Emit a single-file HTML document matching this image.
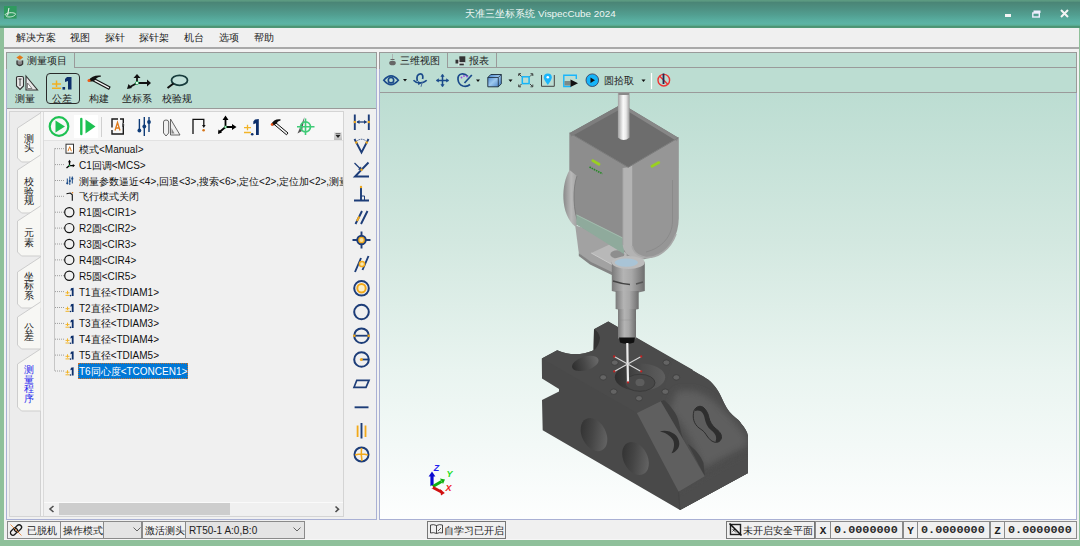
<!DOCTYPE html>
<html><head><meta charset="utf-8">
<style>
*{margin:0;padding:0;box-sizing:border-box}
html,body{width:1080px;height:546px;overflow:hidden;background:#8fc09a;font-family:"Liberation Sans",sans-serif;font-size:10px;color:#1a1a1a}
.a{position:absolute}
svg{position:absolute;overflow:visible}
#title{left:0;top:0;width:1080px;height:28px;background:linear-gradient(#5e9c82 0px,#5a9880 1px,#4a8576 2.5px,#4e9183 9px,#529f91 15px,#58ad9f 20px,#5cb4a5 24px,#58aa90 25.5px,#4c9474 26.5px,#4f9676 27.5px,#8ab8a0 28px)}
#menu{left:4px;top:28px;width:1075px;height:19px;background:#f0f0f0}
#menu span{position:absolute;top:3px;font-size:10px;color:#222}
.mint{background:#bcddd2}
.lbl{position:absolute;font-size:10px;color:#222;white-space:nowrap}
.tr{position:absolute;left:79px;font-size:10px;color:#111;white-space:nowrap;line-height:13px}
.vt{position:absolute;left:24px;width:10px;font-size:9.5px;line-height:9.6px;color:#222;text-align:center}
.sb{position:absolute;top:521px;height:18px;border:1px solid #8a8a8a;background:#f0f0f0;font-size:10px;line-height:17px;white-space:nowrap;color:#222}
</style></head><body>
<!-- TITLE -->
<div id="title" class="a">
  <svg style="left:4.2px;top:6.2px" width="12.6" height="12.6" viewBox="0 0 12.6 12.6"><rect width="12.6" height="12.6" fill="#2f9a5f"/><path d="M4.9 2 C4.6 4 4 7 3.6 9.5" stroke="#e8f4ec" stroke-width="1.1" fill="none"/><path d="M0.8 9 C2 6.5 9 6 11.3 7.6 C12.2 9 9 11 5 11 C2.5 11 1.5 10 2.5 8.8" stroke="#e0f0e6" stroke-width="0.9" fill="none"/></svg>
  <div class="a" style="left:0.5px;width:1080px;top:6.8px;text-align:center;color:#eef6f3;font-size:9.85px;line-height:13px">天准三坐标系统 VispecCube 2024</div>
  <div class="a" style="left:1004.5px;top:14px;width:6px;height:2.5px;background:#f4f4f4"></div>
  <svg style="left:1032px;top:10px" width="9" height="8"><rect x="0.8" y="3" width="6.5" height="4" fill="none" stroke="#eef" stroke-width="1.4"/><rect x="1.5" y="0.5" width="7" height="2.5" fill="#eef"/></svg>
  <svg style="left:1059.5px;top:9px" width="9" height="9"><path d="M1 1L8 8M8 1L1 8" stroke="#f4f4f4" stroke-width="2"/></svg>
</div>
<!-- MENU -->
<div id="menu" class="a">
  <span style="left:12px">解决方案</span>
  <span style="left:66px">视图</span>
  <span style="left:101px">探针</span>
  <span style="left:135px">探针架</span>
  <span style="left:180px">机台</span>
  <span style="left:215px">选项</span>
  <span style="left:250px">帮助</span>
</div>
<div class="a" style="left:4px;top:47px;width:1075px;height:2px;background:#a9a9a9"></div>
<div class="a" style="left:4px;top:49px;width:1075px;height:491px;background:#f2f2f2"></div>

<!-- LEFT PANEL -->
<div class="a mint" style="left:6px;top:52px;width:371px;height:57px;border-top:1px solid #9a9a9a;border-left:1px solid #9a9a9a;border-right:1px solid #9a9a9a"></div>
<div class="a" style="left:74px;top:52px;width:303px;height:16px;border-left:1px solid #9a9a9a;border-bottom:1px solid #9a9a9a"></div>
<div class="a" style="left:6px;top:108px;width:371px;height:1px;background:#9a9a9a"></div>
<div class="a" style="left:6px;top:109px;width:371px;height:411px;background:#f0f0f0;border-left:1px solid #a9b0d4;border-bottom:1px solid #a9b0d4;border-right:1px solid #a9b0d4"></div>
<div class="a" style="left:6px;top:69px;width:1px;height:40px;background:#a9b0d4"></div>
<!-- tab label -->
<svg style="left:14.5px;top:54.5px" width="10" height="12" viewBox="0 0 10 12"><path d="M4.8 0.3L8.2 2.6L4.8 4.9L1.4 2.6Z" fill="#e07818"/><path d="M2 5.5 L2 9 Q4.8 12 7.6 9 L7.6 5.5" stroke="#3a3a3a" stroke-width="1.3" fill="#8a8a8a"/><path d="M3.5 6 L6 6" stroke="#ccc" stroke-width="0.6"/></svg>
<div class="lbl" style="left:27px;top:54px;line-height:13px">测量项目</div>

<!-- inner frame -->
<div class="a" style="left:9px;top:111px;width:335px;height:406px;border:1px solid #d4d4d4;background:#f0f0f0"></div>

<!-- RIBBON ICONS -->
<svg style="left:15px;top:75px" width="24" height="16" viewBox="0 0 24 16">
 <path d="M1.5 2.5 Q1.5 1.5 3 1.5 L7 1.5 Q8.5 1.5 8.5 3 L8.5 11 L5 14.5 L1.5 11 Z" fill="#e8e8e8" stroke="#333" stroke-width="1.1"/>
 <path d="M3.5 4 L6.5 4 M5 4 L5 11" stroke="#333" stroke-width="0.9"/>
 <path d="M11 1 L22.5 15 L11 15 Z" fill="#e8e8e8" stroke="#333" stroke-width="1.1"/>
 <path d="M12.5 8 L12.5 13.5 L17 13.5 Z" fill="#fff" stroke="#555" stroke-width="0.7"/>
</svg>
<div class="lbl" style="left:15px;top:92.7px;line-height:12px">测量</div>
<div class="a" style="left:46px;top:73px;width:34px;height:31px;border:1px solid #2a2a2a;border-radius:4px"></div>
<svg style="left:51px;top:76px" width="23" height="15" viewBox="0 0 23 15">
 <path d="M1 8 L10 8 M5.5 4.5 L5.5 11 M1 12.3 L10 12.3" stroke="#f2b020" stroke-width="1.5"/>
 <path d="M16 1 L20.5 1 L20.5 13.5 L17 13.5 L17 5 L14 6 L14 3 Z" fill="#0d2f6b"/>
 <rect x="11.5" y="11" width="2.6" height="2.6" fill="#0d2f6b"/>
</svg>
<div class="lbl" style="left:52px;top:92.7px;line-height:12px">公差</div>
<svg style="left:87px;top:74px" width="24" height="16" viewBox="0 0 24 16">
 <path d="M7 4.5 L23 13 L21.8 15.2 L5.8 6.7 Z" fill="#f4f4f4" stroke="#111" stroke-width="1.1"/>
 <path d="M1.5 6.2 Q5.5 0.8 13.8 1.6 L13.8 2.8 Q9.5 3.2 8.2 6.2 L5 7.6 L2.5 7.5 Z" fill="#111"/>
 <circle cx="2" cy="6.6" r="1.5" fill="#f05a14"/>
</svg>
<div class="lbl" style="left:89px;top:92.7px;line-height:12px">构建</div>
<svg style="left:125px;top:73px" width="28" height="17" viewBox="0 0 28 17">
 <path d="M12 10 L12 4 M12 10 L23 10 M12 10 L4 14.5" stroke="#111" stroke-width="1.8"/>
 <path d="M12 1 L8.5 5 L15.5 5 Z M26 10 L22 6.5 L22 13.5 Z M2 16 L3.5 11 L7 15 Z" fill="#111"/>
 <circle cx="12" cy="10" r="1.6" fill="#fff" stroke="#1aa050" stroke-width="0.8"/>
</svg>
<div class="lbl" style="left:122px;top:92.7px;line-height:12px">坐标系</div>
<svg style="left:165px;top:74px" width="26" height="16" viewBox="0 0 26 16">
 <ellipse cx="14.5" cy="6.3" rx="8" ry="5" fill="#bfe0d8" stroke="#173c3c" stroke-width="1.8"/>
 <path d="M8.5 9.5 L2.5 14" stroke="#111" stroke-width="2"/>
</svg>
<div class="lbl" style="left:162px;top:92.7px;line-height:12px">校验规</div>

<!-- VERTICAL TABS -->
<div class="a" style="left:10px;top:112px;width:31px;height:404px;background:#ececec"></div>
<div class="a" style="left:40px;top:112px;width:1px;height:404px;background:#d2d2d2"></div>
<div class="a" style="left:41px;top:112px;width:2px;height:404px;background:#f4f4f4"></div>
<div class="a" style="left:43px;top:112px;width:1px;height:404px;background:#dadada"></div>
<svg style="left:0;top:0" width="50" height="520"><path d="M40.5 113 L17.5 128 L17.5 158 L21.5 162 L40.5 162" fill="#f7f7f4" stroke="#cdcdcd" stroke-width="1"/><path d="M40.5 155 L17.5 170 L17.5 209 L21.5 213 L40.5 213" fill="#f7f7f4" stroke="#cdcdcd" stroke-width="1"/><path d="M40.5 206 L17.5 221 L17.5 252 L21.5 256 L40.5 256" fill="#f7f7f4" stroke="#cdcdcd" stroke-width="1"/><path d="M40.5 257 L17.5 272 L17.5 304 L21.5 308 L40.5 308" fill="#f7f7f4" stroke="#cdcdcd" stroke-width="1"/><path d="M40.5 302 L17.5 317 L17.5 345 L21.5 349 L40.5 349" fill="#f7f7f4" stroke="#cdcdcd" stroke-width="1"/><path d="M40.5 349 L17.5 364 L17.5 407 L21.5 411 L40.5 411" fill="#f7f7f4" stroke="#cdcdcd" stroke-width="1"/></svg>
<div class="vt" style="top:133.9px;color:#222">测<br>头</div>
<div class="vt" style="top:177.1px;color:#222">校<br>验<br>规</div>
<div class="vt" style="top:228.4px;color:#222">元<br>素</div>
<div class="vt" style="top:271.6px;color:#222">坐<br>标<br>系</div>
<div class="vt" style="top:322.9px;color:#222">公<br>差</div>
<div class="vt" style="top:365.3px;color:#2a2aee">测<br>量<br>程<br>序</div>

<!-- INNER TOOLBAR -->
<div class="a" style="left:44px;top:112px;width:299px;height:29px;background:#f7f7f7;border-bottom:1px solid #e2e2e2"></div>
<div class="a" style="left:74px;top:115px;width:24px;height:23px;background:#ffffff"></div>
<svg style="left:0;top:0" width="350" height="145">
 <circle cx="59" cy="126.5" r="9.3" fill="none" stroke="#1dc152" stroke-width="2.2"/>
 <path d="M55.5 120.5 L55.5 132.5 L65 126.5 Z" fill="#1dc152"/>
 <path d="M81.3 119 L81.3 134" stroke="#1dc152" stroke-width="2.4" stroke-linecap="round"/>
 <path d="M85.5 119.5 L85.5 133.5 L95.5 126.5 Z" fill="#1dc152"/>
 <path d="M101.5 117 L101.5 137" stroke="#d0d0d0" stroke-width="1"/>
 <path d="M118 119 L112 119 L112 127.5 M112 130 L112 134 L123.3 134 L123.3 126 M123.3 123.5 L123.3 119 L120 119" stroke="#1a1a1a" stroke-width="1.4" fill="none"/>
 <path d="M124.5 125 L122.3 123 L122.3 127 Z" fill="#1a1a1a"/>
 <path d="M115 130.5 L117.5 122.5 L120 130.5 M115.8 128 L119.2 128" stroke="#e07a1a" stroke-width="1.3" fill="none"/>
 <path d="M139.4 119 L139.4 131 M144.3 117 L144.3 136 M149 117 L149 132" stroke="#0f3c78" stroke-width="1.4"/>
 <circle cx="139.4" cy="130.5" r="1.9" fill="#0f3c78"/><circle cx="144.3" cy="126.5" r="1.9" fill="#0f3c78"/><circle cx="149" cy="122" r="1.9" fill="#0f3c78"/>
 <path d="M163.5 122 Q163.5 120 166 120 Q168.7 120 168.7 122 L168.7 133 L166 136 L163.5 133 Z" fill="#f0f0f0" stroke="#555" stroke-width="0.9"/>
 <path d="M170.5 119 L180 135 L170.5 135 Z" fill="#eee" stroke="#555" stroke-width="0.9"/>
 <path d="M171.5 128 L171.5 133.5 L174.5 133.5 Z" fill="#888"/>
 <path d="M193 134 L193 119.3 L203.8 119.3 L203.8 126" stroke="#111" stroke-width="1.3" fill="none"/>
 <path d="M203.8 128 L202 125 L205.6 125 Z" fill="#111"/>
 <circle cx="203.6" cy="130.3" r="1.3" fill="#d5751a"/>
 <path d="M225.5 127 L225.5 119 M225.5 127 L234 127 M225.5 127 L219 132.5" stroke="#000" stroke-width="1.8"/>
 <path d="M225.5 115.5 L222.5 120 L228.5 120 Z M236.5 127 L232 124 L232 130 Z M218 134 L218.5 129.5 L222 132.5 Z" fill="#000"/>
 <circle cx="225.5" cy="127" r="1.1" fill="#e8fff0" stroke="#22b050" stroke-width="0.6"/>
 <path d="M244 127.7 L251 127.7 M247.5 124.8 L247.5 130.3 M244 132.5 L251 132.5" stroke="#f2b428" stroke-width="1.3"/>
 <path d="M255 119.5 L258.8 119 L258.8 135 L256 135 L256 123.3 L253.3 124.3 L253.3 121.5 Z" fill="#0d2f6b"/>
 <circle cx="252.2" cy="134.3" r="1.3" fill="#0d2f6b"/>
 <path d="M275.5 122.5 L288 133 L286.5 134.8 L274 124.3 Z" fill="#f4f4f4" stroke="#111" stroke-width="1"/>
 <path d="M271 124.5 Q274 118.5 280.5 119.3 L280.5 120.5 Q277.5 121 276.5 123.5 L274 125.3 L272.3 125.5 Z" fill="#111"/>
 <circle cx="272" cy="124.5" r="1.3" fill="#f0500f"/>
 <path d="M304.5 117 L297.5 133.5 L302 131 Z" fill="#555"/>
 <circle cx="305.5" cy="126.8" r="5" fill="none" stroke="#3fcb77" stroke-width="1.7"/>
 <path d="M297 126.8 L314.5 126.8 M305.5 118.5 L305.5 135" stroke="#3fcb77" stroke-width="1.6"/>
</svg>
<div class="a" style="left:334px;top:132px;width:8px;height:8px;background:linear-gradient(#e8e8e8,#bcbcbc)"></div>
<svg style="left:335px;top:133px" width="6" height="6"><path d="M0.5 0.8 L5.5 0.8" stroke="#222" stroke-width="0.8"/><path d="M0.5 2 L5.5 2 L3 5 Z" fill="#222"/></svg>

<!-- TREE -->
<svg style="left:0;top:0" width="80" height="380">
 <path d="M54.5 148.5 L54.5 371" stroke="#9c9c9c" stroke-width="1" stroke-dasharray="1 1"/>
 <g stroke="#9c9c9c" stroke-width="1" stroke-dasharray="1 1"><path d="M55 148.7 L64 148.7"/><path d="M55 164.6 L64 164.6"/><path d="M55 180.5 L64 180.5"/><path d="M55 196.3 L64 196.3"/><path d="M55 212.2 L64 212.2"/><path d="M55 228.1 L64 228.1"/><path d="M55 244.0 L64 244.0"/><path d="M55 259.9 L64 259.9"/><path d="M55 275.7 L64 275.7"/><path d="M55 291.6 L64 291.6"/><path d="M55 307.5 L64 307.5"/><path d="M55 323.4 L64 323.4"/><path d="M55 339.2 L64 339.2"/><path d="M55 355.1 L64 355.1"/><path d="M55 371.0 L64 371.0"/></g><rect x="66" y="144.2" width="7.5" height="9" fill="#fff" stroke="#333" stroke-width="1"/><path d="M68 151.2 L69.7 146.7 L71.4 151.2" stroke="#e07a1a" stroke-width="1" fill="none"/><path d="M69.5 165.6 L69.5 161.6 M69.5 165.6 L74 165.6 M69.5 165.6 L66.5 168.1" stroke="#000" stroke-width="1.3"/><path d="M69.5 159.8 L68 162.3 L71 162.3 Z M75 165.6 L72.8 164.0 L72.8 167.2 Z" fill="#000"/><circle cx="69.5" cy="165.6" r="0.8" fill="#2b5"/><path d="M67.3 178.5 L67.3 184.0 M69.8 176.5 L69.8 185.0 M72.3 176.5 L72.3 183.5" stroke="#1a4a88" stroke-width="1"/><circle cx="67.3" cy="183.3" r="1.1" fill="#1a4a88"/><circle cx="69.8" cy="181.0" r="1.1" fill="#1a4a88"/><circle cx="72.3" cy="178.7" r="1.1" fill="#1a4a88"/><path d="M66.5 193.8 L70.3 193.0 L72.3 194.8 L72.3 200.8" stroke="#111" stroke-width="1.1" fill="none"/><circle cx="72.5" cy="192.8" r="0.8" fill="#d5751a"/><circle cx="69.3" cy="212.2" r="4.6" fill="none" stroke="#111" stroke-width="1.2"/><circle cx="69.3" cy="228.1" r="4.6" fill="none" stroke="#111" stroke-width="1.2"/><circle cx="69.3" cy="244.0" r="4.6" fill="none" stroke="#111" stroke-width="1.2"/><circle cx="69.3" cy="259.9" r="4.6" fill="none" stroke="#111" stroke-width="1.2"/><circle cx="69.3" cy="275.7" r="4.6" fill="none" stroke="#111" stroke-width="1.2"/><path d="M65.5 292.8 L69.5 292.8 M67.5 290.8 L67.5 294.2 M65.5 295.4 L69.5 295.4" stroke="#f2b428" stroke-width="1"/><path d="M71 288.3 L73.6 287.8 L73.6 296.1 L71.8 296.1 L71.8 290.3 L70.3 290.8 Z" fill="#0d2f6b"/><circle cx="70.5" cy="295.6" r="0.8" fill="#0d2f6b"/><path d="M65.5 308.7 L69.5 308.7 M67.5 306.7 L67.5 310.1 M65.5 311.3 L69.5 311.3" stroke="#f2b428" stroke-width="1"/><path d="M71 304.2 L73.6 303.7 L73.6 312.0 L71.8 312.0 L71.8 306.2 L70.3 306.7 Z" fill="#0d2f6b"/><circle cx="70.5" cy="311.5" r="0.8" fill="#0d2f6b"/><path d="M65.5 324.6 L69.5 324.6 M67.5 322.6 L67.5 326.0 M65.5 327.2 L69.5 327.2" stroke="#f2b428" stroke-width="1"/><path d="M71 320.1 L73.6 319.6 L73.6 327.9 L71.8 327.9 L71.8 322.1 L70.3 322.6 Z" fill="#0d2f6b"/><circle cx="70.5" cy="327.4" r="0.8" fill="#0d2f6b"/><path d="M65.5 340.4 L69.5 340.4 M67.5 338.4 L67.5 341.8 M65.5 343.0 L69.5 343.0" stroke="#f2b428" stroke-width="1"/><path d="M71 335.9 L73.6 335.4 L73.6 343.7 L71.8 343.7 L71.8 337.9 L70.3 338.4 Z" fill="#0d2f6b"/><circle cx="70.5" cy="343.2" r="0.8" fill="#0d2f6b"/><path d="M65.5 356.3 L69.5 356.3 M67.5 354.3 L67.5 357.7 M65.5 358.9 L69.5 358.9" stroke="#f2b428" stroke-width="1"/><path d="M71 351.8 L73.6 351.3 L73.6 359.6 L71.8 359.6 L71.8 353.8 L70.3 354.3 Z" fill="#0d2f6b"/><circle cx="70.5" cy="359.1" r="0.8" fill="#0d2f6b"/><path d="M65.5 372.2 L69.5 372.2 M67.5 370.2 L67.5 373.6 M65.5 374.8 L69.5 374.8" stroke="#f2b428" stroke-width="1"/><path d="M71 367.7 L73.6 367.2 L73.6 375.5 L71.8 375.5 L71.8 369.7 L70.3 370.2 Z" fill="#0d2f6b"/><circle cx="70.5" cy="375.0" r="0.8" fill="#0d2f6b"/>
</svg>
<div class="a" style="left:44px;top:141px;width:299px;height:361px;overflow:hidden"><div class="tr" style="left:35px;top:1.7px">模式&lt;Manual&gt;</div><div class="tr" style="left:35px;top:17.6px">C1回调&lt;MCS&gt;</div><div class="tr" style="left:35px;top:33.5px">测量参数逼近&lt;4&gt;,回退&lt;3&gt;,搜索&lt;6&gt;,定位&lt;2&gt;,定位加&lt;2&gt;,测量</div><div class="tr" style="left:35px;top:49.3px">飞行模式关闭</div><div class="tr" style="left:35px;top:65.2px">R1圆&lt;CIR1&gt;</div><div class="tr" style="left:35px;top:81.1px">R2圆&lt;CIR2&gt;</div><div class="tr" style="left:35px;top:97.0px">R3圆&lt;CIR3&gt;</div><div class="tr" style="left:35px;top:112.9px">R4圆&lt;CIR4&gt;</div><div class="tr" style="left:35px;top:128.7px">R5圆&lt;CIR5&gt;</div><div class="tr" style="left:35px;top:144.6px">T1直径&lt;TDIAM1&gt;</div><div class="tr" style="left:35px;top:160.5px">T2直径&lt;TDIAM2&gt;</div><div class="tr" style="left:35px;top:176.4px">T3直径&lt;TDIAM3&gt;</div><div class="tr" style="left:35px;top:192.2px">T4直径&lt;TDIAM4&gt;</div><div class="tr" style="left:35px;top:208.1px">T5直径&lt;TDIAM5&gt;</div><div class="a" style="left:34px;top:222.0px;width:110px;height:15.6px;background:#0078d7;outline:1px dotted #c07030;outline-offset:-1px"></div><div class="tr" style="left:35px;top:224.0px;color:#fff">T6同心度&lt;TCONCEN1&gt;</div></div>


<!-- H SCROLLBAR -->
<div class="a" style="left:44px;top:502px;width:299px;height:1px;background:#fafafa"></div>
<div class="a" style="left:44px;top:503px;width:299px;height:13px;background:#f0f0f0"></div>
<div class="a" style="left:59px;top:503px;width:171px;height:12px;background:#cdcdcd"></div>
<svg style="left:0;top:0" width="345" height="520"><path d="M53.5 506 L50 509 L53.5 512" stroke="#505050" stroke-width="1.6" fill="none"/><path d="M335.5 506.5 L338.5 509.2 L335.5 512" stroke="#505050" stroke-width="1.6" fill="none"/></svg>
<!-- VERTICAL TOOLBAR -->
<svg style="left:0;top:0" width="380" height="470">
 <g stroke="#1d3d78" stroke-width="1.9" fill="none">
  <path d="M354.8 114.5 L354.8 130 M368.8 114.5 L368.8 130"/>
  <path d="M357 122 L366.5 122" stroke-width="1.3"/>
 </g>
 <path d="M356.5 122 L359.5 120 L359.5 124 Z M367 122 L364 120 L364 124 Z" fill="#1d3d78"/>
 <circle cx="354.8" cy="122" r="1.2" fill="#f2a91a"/><circle cx="368.8" cy="122" r="1.2" fill="#f2a91a"/>
 <path d="M354.5 139 L361.5 152.5 L368.5 139" stroke="#1d3d78" stroke-width="1.9" fill="none"/>
 <path d="M357.5 140.5 Q361.5 138 365.5 140.5" stroke="#1d3d78" stroke-width="1" stroke-dasharray="1 0.8" fill="none"/>
 <circle cx="356.3" cy="142.5" r="1.2" fill="#f2a91a"/><circle cx="366.7" cy="142.5" r="1.2" fill="#f2a91a"/>
 <path d="M368.5 162.5 L355 176.5 L369 176.5" stroke="#1d3d78" stroke-width="1.9" fill="none"/>
 <path d="M354.5 163 L360.5 169" stroke="#1d3d78" stroke-width="1.2"/>
 <path d="M361.8 170.3 L358 169.5 L361 166.5 Z" fill="#1d3d78"/>
 <circle cx="361.5" cy="169.8" r="1.2" fill="#f2a91a"/>
 <path d="M354 200.5 L369 200.5 M361 187.5 L361 200.5" stroke="#1d3d78" stroke-width="1.9" fill="none"/>
 <path d="M361 196 L364.5 196 L364.5 200" stroke="#1d3d78" stroke-width="1" fill="none"/>
 <circle cx="361" cy="187" r="1.2" fill="#f2a91a"/>
 <path d="M355.5 224 L362 211 M361 224 L367.5 211" stroke="#1d3d78" stroke-width="1.9"/>
 <path d="M357 221 L359.3 216.5" stroke="#f2a91a" stroke-width="1.9"/>
 <circle cx="361.5" cy="240" r="4.3" fill="#f2a91a" stroke="#1d3d78" stroke-width="1.9"/>
 <circle cx="361.5" cy="240" r="2" fill="#f7e0a0"/>
 <path d="M352.5 240 L357 240 M366 240 L370.5 240 M361.5 231.5 L361.5 235.5 M361.5 244.5 L361.5 248.5" stroke="#1d3d78" stroke-width="1.9"/>
 <path d="M355 272 L361 258 M362.5 270 L368.5 256" stroke="#1d3d78" stroke-width="1.9"/>
 <circle cx="362" cy="264" r="2.6" fill="#f7e7b0" stroke="#f2a91a" stroke-width="1.5"/>
 <circle cx="361.5" cy="288.3" r="7.3" fill="none" stroke="#1d3d78" stroke-width="2"/>
 <circle cx="361.5" cy="288.3" r="4.2" fill="#fbf0c8" stroke="#f2a91a" stroke-width="2"/>
 <circle cx="361.5" cy="312" r="7.3" fill="none" stroke="#1d3d78" stroke-width="2"/>
 <circle cx="361.5" cy="335.7" r="7.3" fill="none" stroke="#1d3d78" stroke-width="2"/>
 <path d="M354.5 335.7 L368.5 335.7" stroke="#1d3d78" stroke-width="1.8"/>
 <circle cx="354.3" cy="335.7" r="1.3" fill="#f2a91a"/><circle cx="368.7" cy="335.7" r="1.3" fill="#f2a91a"/>
 <circle cx="361.5" cy="359.5" r="7.3" fill="none" stroke="#1d3d78" stroke-width="2"/>
 <path d="M361.5 359.5 L368.5 359.5" stroke="#1d3d78" stroke-width="1.8"/>
 <circle cx="361.3" cy="359.5" r="1.5" fill="#f2a91a"/>
 <path d="M356.8 380.3 L369 380.3 L366 387.3 L354 387.3 Z" fill="none" stroke="#1d3d78" stroke-width="1.7"/>
 <path d="M354.6 407.3 L368.5 407.3" stroke="#1d3d78" stroke-width="1.9"/>
 <path d="M357.6 425.5 L357.6 437 M365.5 425.5 L365.5 437" stroke="#f2a91a" stroke-width="1.8"/>
 <path d="M361.5 423 L361.5 438.5" stroke="#1d3d78" stroke-width="1.9"/>
 <circle cx="361.5" cy="454.5" r="7" fill="none" stroke="#1d3d78" stroke-width="2"/>
 <path d="M355 455 Q361.5 453 368 455 M361.5 448 Q360.8 454.5 362 461" stroke="#f2a91a" stroke-width="1.5" fill="none"/>
</svg>

<!-- RIGHT PANEL -->
<div class="a" style="left:376px;top:52px;width:1px;height:468px;background:#a9b0d4"></div>
<div class="a" style="left:376px;top:52px;width:1px;height:17px;background:#9a9a9a"></div>
<div class="a mint" style="left:379px;top:52px;width:698px;height:41px;border-top:1px solid #9a9a9a;border-left:1px solid #9a9a9a;border-right:1px solid #9a9a9a"></div>
<div class="a" style="left:447px;top:52px;width:630px;height:16px;border-left:1px solid #9a9a9a;border-bottom:1px solid #9a9a9a"></div>
<div class="a" style="left:496px;top:52px;width:1px;height:16px;background:#9a9a9a"></div>
<div class="a" style="left:379px;top:92px;width:698px;height:1px;background:#9a9a9a"></div>
<div class="a" style="left:379px;top:93px;width:698px;height:427px;border-left:1px solid #a9b0d4;border-right:1px solid #a9b0d4;border-bottom:1px solid #a9b0d4;background:linear-gradient(#bcddd2 0%,#d3e8e0 35%,#e9f4f0 65%,#fdfefe 100%)"></div>
<div class="a" style="left:379px;top:69px;width:1px;height:24px;background:#a9b0d4"></div>
<svg style="left:388px;top:54px" width="9" height="12" viewBox="0 0 9 12"><path d="M4.5 0 L4.5 5" stroke="#aaa" stroke-width="0.8"/><path d="M2.5 5.5 L6.5 5.5" stroke="#666" stroke-width="1"/><ellipse cx="4.5" cy="9" rx="3.3" ry="2.3" fill="#666"/></svg>
<div class="lbl" style="left:400px;top:54px;line-height:13px">三维视图</div>
<svg style="left:455px;top:55.5px" width="11" height="10" viewBox="0 0 11 10"><rect x="4.3" y="0.3" width="6" height="6" fill="#333"/><rect x="0.5" y="3.7" width="3.5" height="3.8" fill="#333"/><rect x="4.3" y="7.3" width="4.5" height="2" fill="#333"/><path d="M3.8 2.8 L3.8 9.5 M3.8 7 L10 7" stroke="#fff" stroke-width="0.8"/></svg>
<div class="lbl" style="left:469px;top:54px;line-height:13px">报表</div>

<svg style="left:0;top:0" width="700" height="95">
 <path d="M383.8 80.2 Q391 71.5 398.3 80.2 Q391 89 383.8 80.2 Z" fill="none" stroke="#1a4a8a" stroke-width="1.7"/>
 <circle cx="391" cy="80.2" r="2.7" fill="none" stroke="#1a4a8a" stroke-width="1.6"/>
 <path d="M403 79 L407 79 L405 81.5 Z" fill="#111"/>
  <path d="M417.3 81 C416.2 77 417.5 73.8 420.4 73.8 C422.8 73.8 423.2 76.5 422.6 79" stroke="#1a4a8a" stroke-width="1.7" fill="none"/>
 <path d="M413.5 80.3 C415 82 417 83 419.3 83 C422 83 425 82 426.7 80.3" stroke="#1a4a8a" stroke-width="1.6" fill="none"/>
 <path d="M421.5 83 L418 81 L418.3 85.2 Z" fill="#1a4a8a"/>
 <path d="M422.3 82 L421 86.8" stroke="#4a6a9a" stroke-width="1"/>
<path d="M436.5 80.4 L448.5 80.4 M442.5 74.5 L442.5 86.5" stroke="#1a4a8a" stroke-width="1.5"/>
 <path d="M436 80.4 L438.8 78.3 L438.8 82.5 Z M449 80.4 L446.2 78.3 L446.2 82.5 Z M442.5 74 L440.4 76.8 L444.6 76.8 Z M442.5 87 L440.4 84.2 L444.6 84.2 Z" fill="#1a4a8a"/>
 <path d="M468 76.5 Q465 73.3 461.5 74 Q457.5 75 458 79.5 Q458.5 84.5 463 86 Q467 87 470 84.5" stroke="#1a4a8a" stroke-width="1.7" fill="none"/>
 <path d="M464.5 83 L471.8 75" stroke="#1a4a8a" stroke-width="1.7"/>
 <circle cx="461.5" cy="77.5" r="0.9" fill="#9a50e0"/><circle cx="464" cy="76" r="0.9" fill="#9a50e0"/><circle cx="467" cy="76.5" r="0.9" fill="#9a50e0"/>
 <path d="M476 79.5 L480 79.5 L478 82 Z" fill="#111"/>
 <defs><linearGradient id="cg" x1="0" y1="0" x2="1" y2="1"><stop offset="0" stop-color="#3f7cc8"/><stop offset="0.5" stop-color="#9cc8ee"/><stop offset="1" stop-color="#3a74c0"/></linearGradient></defs>
 <path d="M487.8 77.5 L490.8 74.5 L501.3 74.5 L501.3 83.8 L498.3 86.8 L487.8 86.8 Z" fill="url(#cg)" stroke="#1a2a3a" stroke-width="0.9"/>
 <path d="M487.8 77.5 L498.3 77.5 L501.3 74.5 M498.3 77.5 L498.3 86.8" stroke="#1a2a3a" stroke-width="0.8" fill="none"/>
 <path d="M508.5 79.5 L512.5 79.5 L510.5 82 Z" fill="#111"/>
 <rect x="522.3" y="76.8" width="6.8" height="6.8" fill="none" stroke="#16b4f8" stroke-width="1.5"/>
 <path d="M519 74 L521.5 76.5 M532.5 74 L530 76.5 M519 86.5 L521.5 84 M532.5 86.5 L530 84" stroke="#333" stroke-width="0.9"/>
 <path d="M518.7 73.7 L518.7 76 M518.7 73.7 L521 73.7 M532.8 73.7 L532.8 76 M532.8 73.7 L530.5 73.7 M518.7 86.8 L518.7 84.5 M518.7 86.8 L521 86.8 M532.8 86.8 L532.8 84.5 M532.8 86.8 L530.5 86.8" stroke="#333" stroke-width="0.9"/>
 <path d="M541.5 75 L541.5 86.3 L554.3 86.3 L554.3 75" stroke="#444" stroke-width="1" fill="none"/>
 <path d="M547.8 85 Q543.8 79.5 543.8 77.5 Q543.8 73.6 547.8 73.6 Q551.8 73.6 551.8 77.5 Q551.8 79.5 547.8 85 Z" fill="#19b6fb"/>
 <circle cx="547.8" cy="77.3" r="1.3" fill="#fff"/>
 <path d="M563.8 84 L563.8 75.3 L576.3 75.3 L576.3 79" stroke="#19b6fb" stroke-width="1.4" fill="none"/>
 <path d="M563.8 84 L563.8 86.5 L571 86.5" stroke="#19b6fb" stroke-width="1.4" fill="none"/>
 <rect x="564.5" y="81" width="6" height="4.5" fill="#7a8a88"/>
 <path d="M570.5 79.5 L578 83.2 L570.5 87 Z" fill="#111"/>
 <circle cx="592.3" cy="80.2" r="6.3" fill="#16b4f8" stroke="#335" stroke-width="0.8"/>
 <path d="M590.5 77.5 L590.5 83 L595 80.2 Z" fill="#111"/>
 <path d="M641.5 79.5 L645.5 79.5 L643.5 82 Z" fill="#111"/>
 <path d="M651.5 73 L651.5 89" stroke="#fff" stroke-width="1.2"/>
 <path d="M650.5 73 L650.5 89" stroke="#c8d8d0" stroke-width="0.6"/>
 <circle cx="663.8" cy="80.2" r="5.8" fill="none" stroke="#ee3333" stroke-width="1.4"/>
 <path d="M659.5 76 L668 84.5" stroke="#ee3333" stroke-width="1.4"/>
 <path d="M663.5 73.5 L663.5 84" stroke="#222a50" stroke-width="1.8"/>
</svg>
<div class="lbl" style="left:604px;top:73.5px;line-height:13px">圆拾取</div>


<!-- 3D SCENE -->
<div class="a" style="left:380px;top:93px;width:696px;height:426px;overflow:hidden">
<svg style="left:0;top:0" width="696" height="426" viewBox="380 93 696 426">
<defs>
 <clipPath id="rclip"><path d="M660.7 401.2 L673 359.3 C690 369 703 376 708.4 379.8 C715 385 719 392 721.5 397.4 C725 405 728 411 732.5 415 C737 419 740 421 741.3 423.7 C745 428 747 431 748 436 L748 473 L680 510 L678.6 491.7 L704.8 476.2 Z"/></clipPath>
 <filter id="blur3" x="-20%" y="-20%" width="140%" height="140%"><feGaussianBlur stdDeviation="3.5"/></filter><filter id="blur1" x="-20%" y="-20%" width="140%" height="140%"><feGaussianBlur stdDeviation="2"/></filter>
 <linearGradient id="shaft" x1="0" x2="1"><stop offset="0" stop-color="#a0a0a0"/><stop offset="0.45" stop-color="#fafafa"/><stop offset="0.7" stop-color="#e8e8e8"/><stop offset="1" stop-color="#9a9a9a"/></linearGradient>
 <linearGradient id="cyl" x1="0" x2="1"><stop offset="0" stop-color="#7a7a7a"/><stop offset="0.35" stop-color="#b4b4b4"/><stop offset="0.6" stop-color="#a8a8a8"/><stop offset="1" stop-color="#6e6e6e"/></linearGradient>
 <linearGradient id="strip" x1="0" x2="1"><stop offset="0" stop-color="#9a9a9a"/><stop offset="0.5" stop-color="#c8c8c8"/><stop offset="1" stop-color="#a4a4a4"/></linearGradient>
 <linearGradient id="hole2" x1="0" y1="0" x2="1" y2="1"><stop offset="0" stop-color="#2c2c2c"/><stop offset="0.45" stop-color="#454545"/><stop offset="1" stop-color="#6e6e6e"/></linearGradient>
 <linearGradient id="hole1" x1="0" y1="0" x2="1" y2="0"><stop offset="0" stop-color="#2e2e2e"/><stop offset="0.5" stop-color="#4a4a4a"/><stop offset="1" stop-color="#6a6a6a"/></linearGradient>
 <linearGradient id="bore" x1="0" y1="0" x2="1" y2="0"><stop offset="0" stop-color="#2e2e2e"/><stop offset="0.55" stop-color="#4e4e4e"/><stop offset="1" stop-color="#5e5e5e"/></linearGradient>
 <linearGradient id="fillet" x1="0" y1="1" x2="1" y2="0"><stop offset="0" stop-color="#555"/><stop offset="0.5" stop-color="#636363"/><stop offset="1" stop-color="#5a5a5a"/></linearGradient>
 <linearGradient id="disc" x1="0" x2="1"><stop offset="0" stop-color="#8a8a8a"/><stop offset="0.5" stop-color="#b8b8b8"/><stop offset="1" stop-color="#9a9a9a"/></linearGradient>
</defs>
<!-- block silhouette / front-left face -->
<path d="M608.3 321.4 L673 359.3 C690 369 703 376 708.4 379.8 C715 385 719 392 721.5 397.4 C725 405 728 411 732.5 415 C737 419 740 421 741.3 423.7 C745 428 747 431 748 436 L748 473 L680 510 L542.7 430.3 L542 400 L559 391.5 L559 389 L542 378.4 L541.8 358.4 L557.2 350.2 Q575.5 358 593.5 350.2 L594 329.3 Z" fill="#494949"/>
<!-- top face -->
<path d="M541.8 358.4 L557.2 350.2 Q575.5 358 593.5 350.2 L594 329.3 L608.3 321.4 L693 370 L660.7 401.2 L636.9 413 Z" fill="#4b4b4b"/>
<!-- cutout inner wall -->
<path d="M594 329.3 L594 350.2 Q599 346 600 338 Q599 332 594 329.3 Z" fill="#333"/>
<!-- fillet region right -->
<path d="M660.7 401.2 L673 359.3 C690 369 703 376 708.4 379.8 C715 385 719 392 721.5 397.4 C725 405 728 411 732.5 415 C737 419 740 421 741.3 423.7 C745 428 747 431 748 436 L748 473 L680 510 L678.6 491.7 L704.8 476.2 Z" fill="#4c4c4c"/>
<g clip-path="url(#rclip)"><g filter="url(#blur3)">
<path d="M676 392 C690 388 702 392 712 400 C724 410 738 424 747 438 L747 446 C735 452 718 460 704 468 C696 450 684 425 670 410 Z" fill="#5e5e5e"/>
</g></g>
<path clip-path="url(#rclip)" d="M704.8 476.2 C720 466 735 458 748 452 L748 473 L680 510 L678.6 491.7 Z" fill="#4d4d4d" filter="url(#blur1)"/>
<!-- groove dark band -->
<path d="M660.7 401.2 L664 400 C671 406 677 414 678.5 421 C680 428 681.5 434 683.5 440 Z" fill="#404040"/>
<path d="M688 444 C695 449 701 456 703.5 463 L704.8 476.2 Z" fill="#404040"/>
<!-- front-right face -->
<path d="M680 497 L704.8 482 L748 458 L748 473 L680 510 Z" fill="#4d4d4d"/>
<!-- slanted face -->
<path d="M636.9 413 L660.7 401.2 L704.8 476.2 L678.6 491.7 Z" fill="#5f5f5f"/>
<path d="M678.6 491.7 L680 510" stroke="#404040" stroke-width="0.6"/>
<!-- dogbone slot -->
<path d="M694 410.7 C696 406 701 405 704 408 C707 411 708.3 414 709 418 C710 422 712 425 715 428 C719 431 722 434 721.4 438 C720.5 442 716.7 443 714 442 C711 441 709.5 439.3 707 436 C704 431 702 430 699 428 C694 424 692 418 694 410.7 Z" fill="#5c5c5c" stroke="#2e2e2e" stroke-width="1"/>
<path d="M694.5 411 C696 406 701 405 704 408 C707 411 708.3 414 709 418 C710 422 712 425 715 428 C719 431 722 434 721.4 438 C720.5 442 717 443 715.5 441.5 C717.5 437 715 433 711.5 430.5 C707 427 705.5 422 704.5 417.5 C703.5 412 700 409 694.5 411 Z" fill="#2e2e2e"/>
<!-- crescent on slanted face -->
<path d="M659.9 431.5 C668 429 679 434 679.3 443.2 C679.5 448 676 452 671.5 453.3 C674 449 675 444 673 440 C670 435 665 432.5 659.9 431.5 Z" fill="#2e2e2e"/>
<!-- holes front -->
<ellipse cx="594" cy="434.6" rx="12" ry="17.5" transform="rotate(-27 594 434.6)" fill="url(#hole2)"/>
<ellipse cx="635.5" cy="458.5" rx="12" ry="17.5" transform="rotate(-27 635.5 458.5)" fill="url(#hole2)"/>
<!-- top holes -->
<ellipse cx="585.3" cy="363.4" rx="13.7" ry="6.8" transform="rotate(-17 585.3 363.4)" fill="url(#hole1)"/>
<ellipse cx="640" cy="377.2" rx="25.2" ry="13.8" fill="url(#bore)"/>
<ellipse cx="640" cy="382.8" rx="15" ry="8.5" fill="#484848" stroke="#3a3a3a" stroke-width="1"/>
<ellipse cx="640" cy="382.4" rx="4.5" ry="3.6" fill="#5d5d5d"/>
<g fill="#646464" stroke="#3a3a3a" stroke-width="0.7">
 <ellipse cx="614.8" cy="362.6" rx="3.4" ry="2.7"/><ellipse cx="666.4" cy="362.6" rx="3.4" ry="2.7"/>
 <ellipse cx="603.2" cy="377.4" rx="3.4" ry="2.7"/><ellipse cx="676.3" cy="377.4" rx="3.4" ry="2.7"/>
 <ellipse cx="613.7" cy="391.7" rx="3.4" ry="2.7"/><ellipse cx="665.3" cy="391.7" rx="3.4" ry="2.7"/>
 <ellipse cx="639" cy="398.3" rx="3.4" ry="2.7"/>
</g>

<!-- PROBE HEAD -->
<!-- bracket -->
<path d="M575.2 225.5 L578.8 252.9 L591 263 L616 275 L630 268 L626.6 240 Z" fill="#a2a2a2"/>
<path d="M578.8 252.9 L591 262 L616 274 L616 277 L590 264.5 L578.8 256 Z" fill="#848484"/>
<path d="M591.2 253 L609 244.8 L640 259 L616 266.8 Z" fill="#b8b8b8"/>
<path d="M591.2 253 L616 266.8 L640 259" stroke="#d0d0d0" stroke-width="0.8" fill="none"/>
<ellipse cx="617.3" cy="254.4" rx="7" ry="4.2" fill="#8e8e8e"/>
<!-- left face -->
<path d="M569.3 132.5 L628.2 166.8 L628.2 254 L576.4 224.3 L569.3 200 Z" fill="#8d8d8d"/>
<!-- disc crescent -->
<path d="M569.6 170 C561 184 560 214 575.2 226.5 L579 224 C573 212 572.5 188 577 176 Z" fill="url(#disc)"/>
<path d="M577 176 C572.5 188 573 212 579 224" stroke="#7a7a7a" stroke-width="0.9" fill="none"/>
<!-- glass band -->
<path d="M576.4 214.8 L624 238.6 L624 254 L576.4 224.3 Z" fill="#8faa9c"/>
<path d="M576.4 214.8 L624 238.6" stroke="#a8c4b4" stroke-width="0.8"/>
<!-- right face -->
<path d="M626.6 168 L628.2 166.8 L678.8 137.3 L678.8 218 C678.5 236 670 250 656 256 C648 259 640 260 634.6 260 L626.6 258 Z" fill="#969696"/>

<!-- front rounded strip -->
<path d="M622.8 168 L628.2 167.3 L632.2 165 L632.2 246 C633 252 638 256 646 257.5 L640 260 C630 258 623 252 622.8 245 Z" fill="#b3b3b3"/>
<path d="M622.8 168 L622.8 245" stroke="#9c9c9c" stroke-width="0.8"/>
<path d="M632.2 246 C633 252 638 256 646 257.5 C658 258 670 250 676 234" stroke="#a8a8a8" stroke-width="1.6" fill="none"/>
<path d="M672.5 180 L672.5 222 C672 236 662 248 646 252" stroke="#858585" stroke-width="0.7" fill="none"/>
<!-- top face -->
<path d="M569.8 133 L622 104 L678.3 137.8 L628.2 167.3 Z" fill="#6d6d6d"/>
<path d="M569.8 133 L622 104 L622.5 108 L571.2 136.4 Z" fill="#7e7e7e"/>
<path d="M622 104 L678.3 137.8 L677 141.2 L622.5 108 Z" fill="#878787"/>
<path d="M569.8 133 L628.2 167.3 L678.3 137.8" stroke="#7c7c7c" stroke-width="1" fill="none"/>
<path d="M617.9 93 L629.6 93 L629.6 137.5 Q623.7 142.5 617.9 137.5 Z" fill="url(#shaft)"/>
<rect x="618.5" y="93" width="10.5" height="2" fill="#8a8a8a"/>
<!-- LEDs -->
<path d="M592.8 160.6 L599 164.3" stroke="#9ad020" stroke-width="2.8" stroke-linecap="round"/>
<path d="M652 166.3 L658.8 162.6" stroke="#9ad020" stroke-width="2.8" stroke-linecap="round"/>
<path d="M589.5 167 L602.5 173.8" stroke="#2a8a2a" stroke-width="1.6" stroke-dasharray="1.6 0.8"/>
<!-- collar -->
<path d="M611.8 262 L644.8 262 L644.8 291 Q628 296 611.8 291 Z" fill="url(#cyl)"/>
<ellipse cx="628.3" cy="262.5" rx="16.5" ry="6.5" fill="#bcbcbc"/>
<ellipse cx="626.3" cy="262.6" rx="11.7" ry="4.2" fill="#a9c4d6"/>
<path d="M613 281 Q622 284 630 284.5" stroke="#444" stroke-width="1.4" fill="none"/>
<path d="M636 284 L643 282" stroke="#555" stroke-width="1.4" fill="none"/>
<path d="M615.6 291 L638.7 291 L638.7 309 Q627 312 615.6 309 Z" fill="url(#cyl)"/>
<path d="M618 309 L636 309 L636 338.5 L618 338.5 Z" fill="url(#cyl)"/>
<path d="M618.5 320 L635.5 320" stroke="#8a8a8a" stroke-width="0.6" stroke-dasharray="1 1"/>
<path d="M619 337.5 L635 337.5 L634 342.5 Q627 345 620 342.5 Z" fill="#111"/>
<!-- stylus -->
<path d="M627.3 343 L627.6 364 L628 382.4" stroke="#ececec" stroke-width="2.2"/>
<path d="M614.2 356.5 L641.2 371.4 M641.2 356.5 L614.2 371.4" stroke="#d8d8d8" stroke-width="1.1"/>
<g fill="#c02222"><circle cx="614.2" cy="356.5" r="1.15"/><circle cx="641.2" cy="356.5" r="1.15"/><circle cx="614.2" cy="371.4" r="1.15"/><circle cx="641.2" cy="371.4" r="1.15"/><circle cx="628" cy="382.4" r="1.15"/></g>

<!-- axis triad -->
<path d="M432 487 L432 476" stroke="#0a0ad0" stroke-width="3.2"/>
<path d="M428.6 476.5 L432 471.5 L435.4 476.5 Z" fill="#0a0ad0"/>
<path d="M432 487 L441.5 481.5" stroke="#10b010" stroke-width="3"/>
<path d="M440 478.5 L445 479.5 L443 484 Z" fill="#10b010"/>
<path d="M432 487 L441.5 492" stroke="#d01010" stroke-width="3"/>
<path d="M440 489 L444.8 493 L441 495.5 Z" fill="#d01010"/>
<circle cx="431.5" cy="487" r="1.5" fill="#fff"/>
<text x="433.8" y="470.5" font-family="Liberation Sans" font-size="9" font-style="italic" font-weight="bold" fill="#2020f0">Z</text>
<text x="446.5" y="477" font-family="Liberation Sans" font-size="9" font-style="italic" font-weight="bold" fill="#22dd22">Y</text>
<text x="445.5" y="491" font-family="Liberation Sans" font-size="9" font-style="italic" font-weight="bold" fill="#f02020">X</text>
</svg>
</div>
<!-- STATUS BAR -->
<div class="a" style="left:4px;top:520px;width:1075px;height:20px;background:#f0f0f0"></div>
<div class="a" style="left:4px;top:539px;width:1075px;height:1px;background:#f6f6f6"></div>
<div class="sb" style="left:7px;width:54px"></div>
<svg style="left:9px;top:523px" width="14" height="14" viewBox="0 0 14 14"><g fill="none" stroke="#1a1a1a" stroke-width="1.3"><rect x="6.5" y="1.3" width="5" height="8" rx="2.5" transform="rotate(45 9 5.3)"/><rect x="2.5" y="4.7" width="5" height="8" rx="2.5" transform="rotate(45 5 8.7)"/></g><path d="M1.5 1.5 L12.5 12.5" stroke="#e8843a" stroke-width="0.9"/></svg>
<div class="lbl" style="left:27px;top:524px;line-height:13px">已脱机</div>
<div class="sb" style="left:60px;width:44px;padding-left:2px">操作模式</div>
<div class="sb" style="left:103px;width:39px;background:#e4e4e4"></div>
<svg style="left:133px;top:527px" width="8" height="5"><path d="M0.5 0.5 L4 4 L7.5 0.5" stroke="#555" stroke-width="0.9" fill="none"/></svg>
<div class="sb" style="left:142px;width:44px;padding-left:2px">激活测头</div>
<div class="sb" style="left:185px;width:120px;background:#e4e4e4;padding-left:3px">RT50-1 A:0,B:0</div>
<svg style="left:293px;top:527px" width="8" height="5"><path d="M0.5 0.5 L4 4 L7.5 0.5" stroke="#555" stroke-width="0.9" fill="none"/></svg>
<div class="sb" style="left:427px;width:79px;border-color:#777"></div>
<svg style="left:430px;top:524px" width="13" height="11" viewBox="0 0 13 11"><path d="M0.5 1 Q3.5 0 6.5 1.5 Q9.5 0 12.5 1 L12.5 9 Q9.5 8 6.5 9.5 Q3.5 8 0.5 9 Z M6.5 1.5 L6.5 9.5" stroke="#333" stroke-width="0.9" fill="none"/><path d="M8 7 L11 4" stroke="#555" stroke-width="1"/></svg>
<div class="lbl" style="left:444px;top:524px;line-height:13px">自学习已开启</div>
<div class="sb" style="left:726px;width:89px;border-color:#777"></div>
<svg style="left:729px;top:523px" width="13" height="13" viewBox="0 0 13 13"><rect x="1.5" y="1.5" width="10" height="10" fill="none" stroke="#222" stroke-width="1.4"/><path d="M3.5 6 L7 9.5 M3.5 8.5 L6 6" stroke="#222" stroke-width="0.9"/><path d="M0.5 0.5 L12.5 12.5" stroke="#111" stroke-width="1.6"/></svg>
<div class="lbl" style="left:743px;top:523.5px;line-height:13px;font-size:9.6px">未开启安全平面</div>
<div class="sb" style="left:815px;width:16px;font-weight:bold;font-size:11px;line-height:19px;text-align:center;font-family:'Liberation Mono',monospace">X</div>
<div class="sb" style="left:830px;width:73px;font-size:11.8px;line-height:17px;font-weight:bold;font-family:'Liberation Mono',monospace;padding-left:3px;color:#2a2a2a">0.0000000</div>
<div class="sb" style="left:903px;width:15px;font-weight:bold;font-size:11px;line-height:19px;text-align:center;font-family:'Liberation Mono',monospace">Y</div>
<div class="sb" style="left:917px;width:73px;font-size:11.8px;line-height:17px;font-weight:bold;font-family:'Liberation Mono',monospace;padding-left:3px;color:#2a2a2a">0.0000000</div>
<div class="sb" style="left:990px;width:15px;font-weight:bold;font-size:11px;line-height:19px;text-align:center;font-family:'Liberation Mono',monospace">Z</div>
<div class="sb" style="left:1004px;width:73px;font-size:11.8px;line-height:17px;font-weight:bold;font-family:'Liberation Mono',monospace;padding-left:3px;color:#2a2a2a">0.0000000</div>
</body></html>
